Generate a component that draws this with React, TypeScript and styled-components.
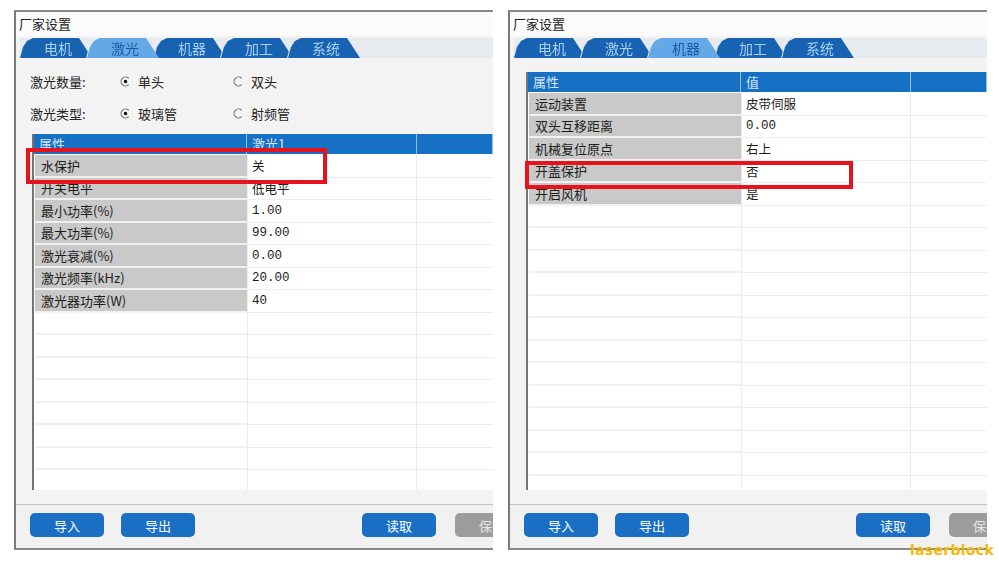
import React from "react";
import styled, { createGlobalStyle, css } from "styled-components";

const GlobalStyle = createGlobalStyle`
  html, body {
    margin: 0;
    padding: 0;
    background: #ffffff;
  }
  body {
    font-family: "Noto Sans CJK SC", "Noto Sans", sans-serif;
    color: #1e1e1e;
  }
`;

const Page = styled.div`
  position: relative;
  width: 999px;
  height: 562px;
  display: flex;
  gap: 15px;
  padding: 10px 0 0 14px;
  box-sizing: border-box;
  overflow: hidden;
`;

const Window = styled.div`
  position: relative;
  width: 479px;
  height: 540px;
  flex-shrink: 0;
  box-sizing: border-box;
  border-top: 2px solid #8a8a8a;
  border-left: 2px solid #7a7a7a;
  border-bottom: 2px solid #8a8a8a;
  background: #f3f3f3;
  display: flex;
  flex-direction: column;
  overflow: hidden;
`;

const Title = styled.div`
  height: 24px;
  line-height: 24px;
  padding-left: 3px;
  font-size: 13px;
  color: #222;
  background: #fbfbfb;
`;

const TabStrip = styled.div`
  margin-top: 2px;
  margin-left: 4px;
  height: 20px;
  display: flex;
  background: #e7eaee;
`;

const TabWrap = styled.div<{ $active: boolean; $first: boolean }>`
  position: relative;
  width: 72px;
  height: 20px;
  margin-left: ${({ $first }) => ($first ? "0" : "-5px")};
  z-index: ${({ $active }) => ($active ? 2 : 1)};
  filter: drop-shadow(-1px 0 0 #dde6f0);
`;

const Tab = styled.div<{ $active: boolean }>`
  height: 100%;
  display: flex;
  align-items: center;
  justify-content: center;
  padding-left: 4px;
  font-size: 14px;
  clip-path: polygon(0 100%, 3px 45%, 7px 15%, 13px 0, calc(100% - 13px) 0, 100% 100%);
  ${({ $active }) =>
    $active
      ? css`
          background: #63a9e8;
          color: #1b5da6;
        `
      : css`
          background: #1763b2;
          color: #a9d0f3;
        `}
`;

const Body = styled.div<{ $top: number }>`
  flex: 1;
  display: flex;
  flex-direction: column;
  gap: 10px;
  padding: ${({ $top }) => $top}px 0 14px 16px;
  min-height: 0;
`;

const OptionRow = styled.div`
  height: 22px;
  display: flex;
  align-items: center;
  font-size: 13px;
  color: #222;
`;

const OptionLabel = styled.span`
  width: 90px;
  margin-left: -2px;
`;

const Radio = styled.label<{ $width: number }>`
  width: ${({ $width }) => $width}px;
  display: flex;
  align-items: center;
  gap: 7px;
`;

const Table = styled.div`
  flex: 1;
  display: flex;
  flex-direction: column;
  border-left: 2px solid #747474;
  background: #ffffff;
  overflow: hidden;
`;

const HeadRow = styled.div`
  height: 20px;
  flex-shrink: 0;
  margin-bottom: 1px;
  display: flex;
  background: #1670c4;
  color: #d4e6f8;
  font-size: 13px;
  line-height: 20px;
`;

const HeadCell = styled.div<{ $width?: number }>`
  width: ${({ $width }) => ($width ? `${$width}px` : "auto")};
  flex: ${({ $width }) => ($width ? "0 0 auto" : "1")};
  box-sizing: border-box;
  padding-left: 5px;
  border-right: 1px solid #8ec2ee;
`;

const Row = styled.div`
  height: 22.5px;
  flex-shrink: 0;
  display: flex;
  font-size: 13px;
`;

const NameCell = styled.div<{ $filled: boolean }>`
  width: 212px;
  flex-shrink: 0;
  margin-left: 1px;
  box-sizing: border-box;
  padding-left: 6px;
  display: flex;
  align-items: center;
  color: #1c1c1c;
  background: ${({ $filled }) => ($filled ? "#c9c9c9" : "#ffffff")};
  border-bottom: 2px solid ${({ $filled }) => ($filled ? "#f1f1f1" : "#efefef")};
`;

const ValueCell = styled.div`
  width: 170px;
  flex-shrink: 0;
  box-sizing: border-box;
  padding-left: 4px;
  display: flex;
  align-items: center;
  font-family: "Liberation Mono", "Noto Sans CJK SC", monospace;
  font-size: 12.5px;
  color: #1c1c1c;
  border-left: 1px solid #ececec;
  border-right: 1px solid #ececec;
  border-bottom: 1px solid #ececec;
`;

const SpareCell = styled.div`
  flex: 1;
  border-bottom: 1px solid #ececec;
`;

const Footer = styled.div`
  height: 44px;
  flex-shrink: 0;
  box-sizing: border-box;
  border-top: 1px solid #c4c4c4;
  padding: 8px 0 0 14px;
  display: flex;
  background: #f1f1f1;
  overflow: hidden;
`;

const Button = styled.button<{ $gap: number; $disabled?: boolean }>`
  width: 74px;
  height: 24px;
  flex-shrink: 0;
  margin-left: ${({ $gap }) => $gap}px;
  border: none;
  border-radius: 5px;
  background: ${({ $disabled }) => ($disabled ? "#9c9c9c" : "#1a6fc4")};
  color: ${({ $disabled }) => ($disabled ? "#e6e6e6" : "#ffffff")};
  font-family: "Noto Sans CJK SC", sans-serif;
  font-size: 13px;
  padding: 0;
`;

const Highlight = styled.div<{ $left: number; $top: number; $width: number; $height: number }>`
  position: absolute;
  left: ${({ $left }) => $left}px;
  top: ${({ $top }) => $top}px;
  width: ${({ $width }) => $width}px;
  height: ${({ $height }) => $height}px;
  box-sizing: border-box;
  border: 4px solid #e8121b;
  pointer-events: none;
`;

const Watermark = styled.div`
  position: absolute;
  right: 5px;
  bottom: 4px;
  font-family: "DejaVu Sans", sans-serif;
  font-weight: bold;
  font-size: 14px;
  letter-spacing: 0.3px;
  color: #f5b90a;
`;

const RadioMark = ({ checked }: { checked: boolean }) => (
  <svg width="11" height="11" viewBox="0 0 11 11">
    <path d="M8.7 2.3 A4.5 4.5 0 1 0 8.7 8.7" fill="none" stroke="#6a6a6a" strokeWidth="1.1" />
    {checked && <circle cx="5.5" cy="5.5" r="1.7" fill="#111" />}
  </svg>
);

const TABS = ["电机", "激光", "机器", "加工", "系统"];

type Item = [string, string];

const laserRows: Item[] = [
  ["水保护", "关"],
  ["开关电平", "低电平"],
  ["最小功率(%)", "1.00"],
  ["最大功率(%)", "99.00"],
  ["激光衰减(%)", "0.00"],
  ["激光频率(kHz)", "20.00"],
  ["激光器功率(W)", "40"],
];

const machineRows: Item[] = [
  ["运动装置", "皮带伺服"],
  ["双头互移距离", "0.00"],
  ["机械复位原点", "右上"],
  ["开盖保护", "否"],
  ["开启风机", "是"],
];

const Tabs = ({ active }: { active: string }) => (
  <TabStrip>
    {TABS.map((t, i) => (
      <TabWrap key={t} $active={t === active} $first={i === 0}>
        <Tab $active={t === active}>{t}</Tab>
      </TabWrap>
    ))}
  </TabStrip>
);

const PropTable = ({ rows, valueHead, total }: { rows: Item[]; valueHead: string; total: number }) => {
  const filler = Array.from({ length: total - rows.length });
  return (
    <Table>
      <HeadRow>
        <HeadCell $width={213}>属性</HeadCell>
        <HeadCell $width={170}>{valueHead}</HeadCell>
        <HeadCell />
      </HeadRow>
      {rows.map(([name, value]) => (
        <Row key={name}>
          <NameCell $filled>{name}</NameCell>
          <ValueCell>{value}</ValueCell>
          <SpareCell />
        </Row>
      ))}
      {filler.map((_, i) => (
        <Row key={"f" + i}>
          <NameCell $filled={false} />
          <ValueCell />
          <SpareCell />
        </Row>
      ))}
    </Table>
  );
};

const Buttons = () => (
  <Footer>
    <Button $gap={0}>导入</Button>
    <Button $gap={17}>导出</Button>
    <Button $gap={167}>读取</Button>
    <Button $gap={19} $disabled>
      保存
    </Button>
  </Footer>
);

const App: React.FC = () => {
  return (
    <>
      <GlobalStyle />
      <Page>
        <Window>
          <Title>厂家设置</Title>
          <Tabs active="激光" />
          <Body $top={12}>
            <OptionRow>
              <OptionLabel>激光数量:</OptionLabel>
              <Radio $width={113}>
                <RadioMark checked />
                单头
              </Radio>
              <Radio $width={90}>
                <RadioMark checked={false} />
                双头
              </Radio>
            </OptionRow>
            <OptionRow>
              <OptionLabel>激光类型:</OptionLabel>
              <Radio $width={113}>
                <RadioMark checked />
                玻璃管
              </Radio>
              <Radio $width={90}>
                <RadioMark checked={false} />
                射频管
              </Radio>
            </OptionRow>
            <PropTable rows={laserRows} valueHead="激光1" total={15} />
          </Body>
          <Buttons />
          <Highlight $left={10} $top={136} $width={301} $height={36} />
        </Window>

        <Window>
          <Title>厂家设置</Title>
          <Tabs active="机器" />
          <Body $top={14}>
            <PropTable rows={machineRows} valueHead="值" total={18} />
          </Body>
          <Buttons />
          <Highlight $left={15} $top={149} $width={328} $height={28} />
        </Window>
        <Watermark>laserblock</Watermark>
      </Page>
    </>
  );
};

export default App;
